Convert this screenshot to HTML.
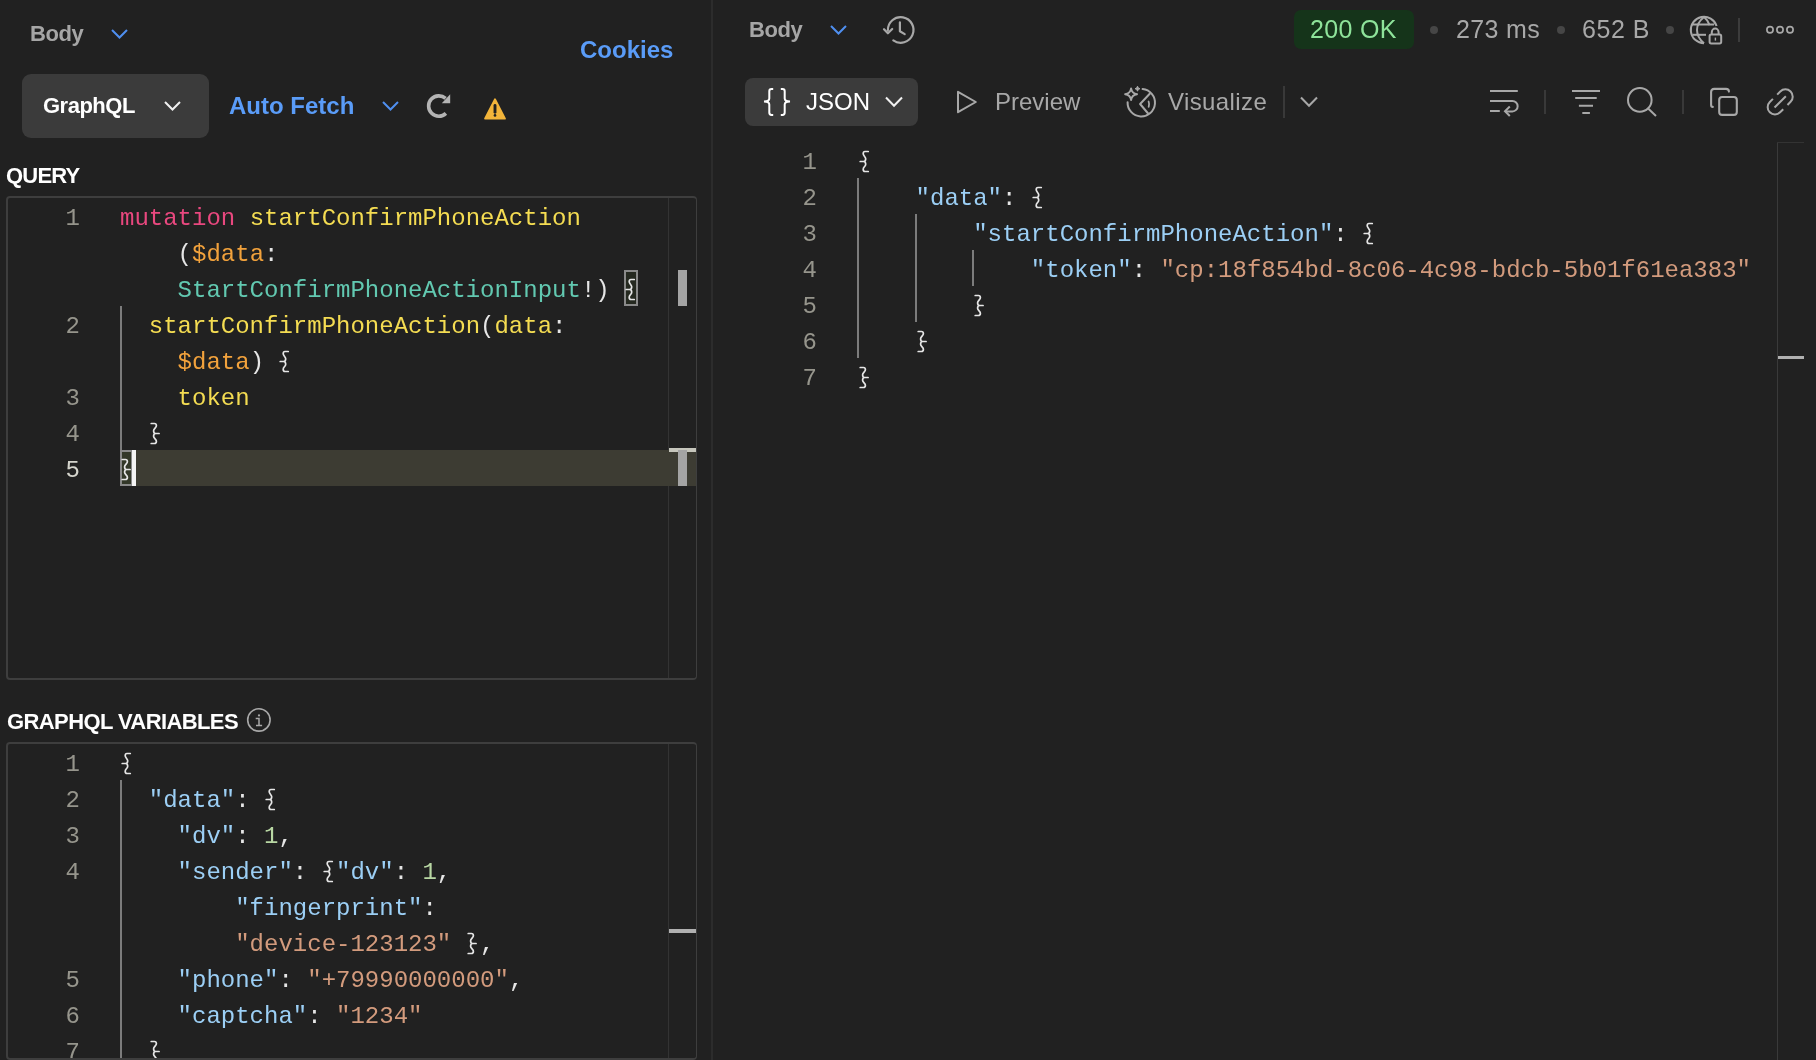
<!DOCTYPE html>
<html><head><meta charset="utf-8">
<style>
*{margin:0;padding:0;box-sizing:border-box}
html,body{width:1816px;height:1060px;overflow:hidden;background:#212121}
body{position:relative;font-family:"Liberation Sans",sans-serif}
.a{position:absolute;white-space:pre}
.ui,.code{will-change:transform}
.ui{font-family:"Liberation Sans",sans-serif;line-height:1}
.b{font-weight:bold}
.code{font-family:"Liberation Mono",monospace;font-size:24px;line-height:36px;white-space:pre;margin-top:3px;z-index:2}
.ln{color:#96958c;text-align:right;width:40px}
.kw{color:#e9487f}.fn{color:#f4dc52}.vr{color:#f2a23c}.ty{color:#62c9b1}.pu{color:#e6e6e6}
.k{color:#9ccff5}.s{color:#d39b7d}.n{color:#b8d7a3}
svg{position:absolute;overflow:visible}
.br{display:inline-block;position:relative;width:14.4px;height:36px;vertical-align:top}
.br svg{left:0;top:-3px;fill:none;stroke:#e6e6e6;stroke-width:1.7;stroke-linecap:round}
</style></head><body>

<!-- divider -->
<div class="a" style="left:711px;top:0;width:2px;height:1060px;background:#2c2c2c"></div>

<!-- LEFT HEADER -->
<div class="a ui b" style="left:30px;top:23px;font-size:22px;color:#a6a6a6;letter-spacing:-0.4px">Body</div>
<svg style="left:111px;top:29px" width="17" height="10" viewBox="0 0 17 10"><path d="M1 1 L8.5 8.5 L16 1" fill="none" stroke="#4f8ff0" stroke-width="2"/></svg>
<div class="a ui b" style="left:580px;top:38px;font-size:24px;color:#5a9cf8">Cookies</div>

<div class="a" style="left:22px;top:74px;width:187px;height:64px;background:#3b3b3b;border-radius:9px"></div>
<div class="a ui b" style="left:43px;top:95px;font-size:22px;color:#ffffff;letter-spacing:-0.5px">GraphQL</div>
<svg style="left:164px;top:101px" width="17" height="10" viewBox="0 0 17 10"><path d="M1 1 L8.5 8.5 L16 1" fill="none" stroke="#f0f0f0" stroke-width="2"/></svg>

<div class="a ui b" style="left:229px;top:94px;font-size:24px;color:#5a9cf8">Auto Fetch</div>
<svg style="left:382px;top:101px" width="17" height="10" viewBox="0 0 17 10"><path d="M1 1 L8.5 8.5 L16 1" fill="none" stroke="#4f8ff0" stroke-width="2"/></svg>
<svg style="left:420px;top:88px" width="40" height="40" viewBox="0 0 40 40"><path d="M25.9 25.4 A10.2 10.2 0 1 1 25.6 10.4" fill="none" stroke="#b4b4b4" stroke-width="3.6"/><path d="M21.8 15.2 L30.2 15.2 L30.2 6.2 Z" fill="#b4b4b4"/></svg>
<svg style="left:460px;top:88px" width="50" height="40" viewBox="0 0 50 40"><path d="M35 11.2 L45 30.6 L25 30.6 Z" fill="#f2b43a" stroke="#f2b43a" stroke-width="1.8" stroke-linejoin="round"/><path d="M35 17.5 L35 24.3" stroke="#212121" stroke-width="2.9" stroke-linecap="round"/><circle cx="35" cy="27.4" r="1.35" fill="#212121"/></svg>

<!-- QUERY -->
<div class="a ui b" style="left:6px;top:165px;font-size:22px;color:#ffffff;letter-spacing:-0.8px">QUERY</div>
<div class="a" style="left:6px;top:196px;width:691px;height:484px;border:2px solid #3e3e3e;border-right-width:1px;border-radius:4px"></div>
<div class="a" style="left:668px;top:198px;width:1px;height:480px;background:#333333"></div>

<!-- query lines -->
<div class="a" style="left:120px;top:450px;width:576px;height:36px;background:#3d3c33"></div>
<div class="a code ln" style="left:40px;top:198px">1</div>
<div class="a code ln" style="left:40px;top:306px">2</div>
<div class="a code ln" style="left:40px;top:378px">3</div>
<div class="a code ln" style="left:40px;top:414px">4</div>
<div class="a code ln" style="left:40px;top:450px;color:#d4d4cc">5</div>
<div class="a code" style="left:120px;top:198px"><span class="kw">mutation</span> <span class="fn">startConfirmPhoneAction</span></div>
<div class="a code" style="left:120px;top:234px"><span class="pu">    (</span><span class="vr">$data</span><span class="pu">:</span></div>
<div class="a code" style="left:120px;top:270px"><span class="ty">    StartConfirmPhoneActionInput</span><span class="pu">!) <span class="br"><svg viewBox="0 0 14.4 36" width="14.4" height="36"><path d="M10.3 9.5 L7 9.5 C5.6 9.5 5.2 10.4 5.2 11.8 C5.2 13.6 7.7 14.8 7.7 16.8 C7.7 18.6 6.8 19.5 5.6 19.5 L2.2 19.5 M5.6 19.5 C6.8 19.5 7.7 20.5 7.7 22.2 C7.7 24.2 5.2 25.4 5.2 27.2 C5.2 28.6 5.6 29.5 7 29.5 L10.3 29.5"/></svg></span></span></div>
<div class="a code" style="left:120px;top:306px"><span class="fn">  startConfirmPhoneAction</span><span class="pu">(</span><span class="fn">data</span><span class="pu">:</span></div>
<div class="a code" style="left:120px;top:342px"><span class="vr">    $data</span><span class="pu">) <span class="br"><svg viewBox="0 0 14.4 36" width="14.4" height="36"><path d="M10.3 9.5 L7 9.5 C5.6 9.5 5.2 10.4 5.2 11.8 C5.2 13.6 7.7 14.8 7.7 16.8 C7.7 18.6 6.8 19.5 5.6 19.5 L2.2 19.5 M5.6 19.5 C6.8 19.5 7.7 20.5 7.7 22.2 C7.7 24.2 5.2 25.4 5.2 27.2 C5.2 28.6 5.6 29.5 7 29.5 L10.3 29.5"/></svg></span></span></div>
<div class="a code" style="left:120px;top:378px"><span class="fn">    token</span></div>
<div class="a code" style="left:120px;top:414px"><span class="pu">  <span class="br"><svg viewBox="0 0 14.4 36" width="14.4" height="36"><path d="M2.2 9.5 L5.4 9.5 C6.8 9.5 7.4 10.4 7.4 11.8 C7.4 13.6 4.6 14.8 4.6 16.8 C4.6 18.6 5.4 19.5 6.6 19.5 L10.1 19.5 M6.6 19.5 C5.4 19.5 4.6 20.5 4.6 22.2 C4.6 24.2 7.4 25.4 7.4 27.2 C7.4 28.6 6.8 29.5 5.4 29.5 L2.2 29.5"/></svg></span></span></div>
<div class="a code" style="left:120px;top:450px"><span class="pu"><span class="br"><svg viewBox="0 0 14.4 36" width="14.4" height="36"><path d="M2.2 9.5 L5.4 9.5 C6.8 9.5 7.4 10.4 7.4 11.8 C7.4 13.6 4.6 14.8 4.6 16.8 C4.6 18.6 5.4 19.5 6.6 19.5 L10.1 19.5 M6.6 19.5 C5.4 19.5 4.6 20.5 4.6 22.2 C4.6 24.2 7.4 25.4 7.4 27.2 C7.4 28.6 6.8 29.5 5.4 29.5 L2.2 29.5"/></svg></span></span></div>

<!-- GRAPHQL VARIABLES -->
<div class="a ui b" style="left:7px;top:711px;font-size:22px;color:#ffffff;letter-spacing:-0.6px">GRAPHQL VARIABLES</div>
<div class="a" style="left:6px;top:742px;width:691px;height:318px;border:2px solid #3e3e3e;border-right-width:1px;border-radius:4px;z-index:5;box-shadow:0 2px 0 #212121"></div>
<div class="a" style="left:668px;top:744px;width:1px;height:314px;background:#333333"></div>

<div class="a code ln" style="left:40px;top:744px">1</div>
<div class="a code ln" style="left:40px;top:780px">2</div>
<div class="a code ln" style="left:40px;top:816px">3</div>
<div class="a code ln" style="left:40px;top:852px">4</div>
<div class="a code ln" style="left:40px;top:960px">5</div>
<div class="a code ln" style="left:40px;top:996px">6</div>
<div class="a code ln" style="left:40px;top:1032px">7</div>
<div class="a code" style="left:120px;top:744px"><span class="pu"><span class="br"><svg viewBox="0 0 14.4 36" width="14.4" height="36"><path d="M10.3 9.5 L7 9.5 C5.6 9.5 5.2 10.4 5.2 11.8 C5.2 13.6 7.7 14.8 7.7 16.8 C7.7 18.6 6.8 19.5 5.6 19.5 L2.2 19.5 M5.6 19.5 C6.8 19.5 7.7 20.5 7.7 22.2 C7.7 24.2 5.2 25.4 5.2 27.2 C5.2 28.6 5.6 29.5 7 29.5 L10.3 29.5"/></svg></span></span></div>
<div class="a code" style="left:120px;top:780px"><span class="k">  "data"</span><span class="pu">: <span class="br"><svg viewBox="0 0 14.4 36" width="14.4" height="36"><path d="M10.3 9.5 L7 9.5 C5.6 9.5 5.2 10.4 5.2 11.8 C5.2 13.6 7.7 14.8 7.7 16.8 C7.7 18.6 6.8 19.5 5.6 19.5 L2.2 19.5 M5.6 19.5 C6.8 19.5 7.7 20.5 7.7 22.2 C7.7 24.2 5.2 25.4 5.2 27.2 C5.2 28.6 5.6 29.5 7 29.5 L10.3 29.5"/></svg></span></span></div>
<div class="a code" style="left:120px;top:816px"><span class="k">    "dv"</span><span class="pu">: </span><span class="n">1</span><span class="pu">,</span></div>
<div class="a code" style="left:120px;top:852px"><span class="k">    "sender"</span><span class="pu">: <span class="br"><svg viewBox="0 0 14.4 36" width="14.4" height="36"><path d="M10.3 9.5 L7 9.5 C5.6 9.5 5.2 10.4 5.2 11.8 C5.2 13.6 7.7 14.8 7.7 16.8 C7.7 18.6 6.8 19.5 5.6 19.5 L2.2 19.5 M5.6 19.5 C6.8 19.5 7.7 20.5 7.7 22.2 C7.7 24.2 5.2 25.4 5.2 27.2 C5.2 28.6 5.6 29.5 7 29.5 L10.3 29.5"/></svg></span></span><span class="k">"dv"</span><span class="pu">: </span><span class="n">1</span><span class="pu">,</span></div>
<div class="a code" style="left:120px;top:888px"><span class="k">        "fingerprint"</span><span class="pu">:</span></div>
<div class="a code" style="left:120px;top:924px"><span class="s">        "device-123123"</span><span class="pu"> <span class="br"><svg viewBox="0 0 14.4 36" width="14.4" height="36"><path d="M2.2 9.5 L5.4 9.5 C6.8 9.5 7.4 10.4 7.4 11.8 C7.4 13.6 4.6 14.8 4.6 16.8 C4.6 18.6 5.4 19.5 6.6 19.5 L10.1 19.5 M6.6 19.5 C5.4 19.5 4.6 20.5 4.6 22.2 C4.6 24.2 7.4 25.4 7.4 27.2 C7.4 28.6 6.8 29.5 5.4 29.5 L2.2 29.5"/></svg></span>,</span></div>
<div class="a code" style="left:120px;top:960px"><span class="k">    "phone"</span><span class="pu">: </span><span class="s">"+79990000000"</span><span class="pu">,</span></div>
<div class="a code" style="left:120px;top:996px"><span class="k">    "captcha"</span><span class="pu">: </span><span class="s">"1234"</span></div>
<div class="a code" style="left:120px;top:1032px"><span class="pu">  <span class="br"><svg viewBox="0 0 14.4 36" width="14.4" height="36"><path d="M2.2 9.5 L5.4 9.5 C6.8 9.5 7.4 10.4 7.4 11.8 C7.4 13.6 4.6 14.8 4.6 16.8 C4.6 18.6 5.4 19.5 6.6 19.5 L10.1 19.5 M6.6 19.5 C5.4 19.5 4.6 20.5 4.6 22.2 C4.6 24.2 7.4 25.4 7.4 27.2 C7.4 28.6 6.8 29.5 5.4 29.5 L2.2 29.5"/></svg></span></span></div>

<!-- RIGHT HEADER -->
<div class="a ui b" style="left:749px;top:19px;font-size:22px;color:#a6a6a6;letter-spacing:-0.4px">Body</div>
<svg style="left:830px;top:25px" width="17" height="10" viewBox="0 0 17 10"><path d="M1 1 L8.5 8.5 L16 1" fill="none" stroke="#4f8ff0" stroke-width="2"/></svg>

<div class="a" style="left:1294px;top:10px;width:120px;height:39px;background:#15341a;border-radius:7px"></div>
<div class="a ui" style="left:1310px;top:17px;font-size:25px;color:#8ee39a;letter-spacing:0.35px">200 OK</div>
<div class="a ui" style="left:1456px;top:17px;font-size:25px;color:#a8a8a8;letter-spacing:0.35px">273 ms</div>
<div class="a ui" style="left:1582px;top:17px;font-size:25px;color:#a8a8a8;letter-spacing:0.55px">652 B</div>

<!-- JSON button row -->
<div class="a" style="left:745px;top:78px;width:173px;height:48px;background:#3b3b3b;border-radius:8px"></div>
<div class="a ui" style="left:806px;top:89.5px;font-size:24px;color:#ffffff">JSON</div>
<div class="a ui" style="left:995px;top:89.5px;font-size:24px;color:#a8a8a8">Preview</div>
<div class="a ui" style="left:1168px;top:89.5px;font-size:24px;letter-spacing:0.4px;color:#a8a8a8">Visualize</div>

<!-- response editor -->
<div class="a" style="left:1777px;top:142px;width:1px;height:918px;background:#3a3a3a"></div><div class="a" style="left:1777px;top:142px;width:27px;height:1px;background:#333333"></div>
<div class="a" style="left:1778px;top:356px;width:26px;height:3px;background:#b0b0b0"></div>
<div class="a code ln" style="left:777px;top:142px">1</div>
<div class="a code ln" style="left:777px;top:178px">2</div>
<div class="a code ln" style="left:777px;top:214px">3</div>
<div class="a code ln" style="left:777px;top:250px">4</div>
<div class="a code ln" style="left:777px;top:286px">5</div>
<div class="a code ln" style="left:777px;top:322px">6</div>
<div class="a code ln" style="left:777px;top:358px">7</div>
<div class="a code" style="left:858px;top:142px"><span class="pu"><span class="br"><svg viewBox="0 0 14.4 36" width="14.4" height="36"><path d="M10.3 9.5 L7 9.5 C5.6 9.5 5.2 10.4 5.2 11.8 C5.2 13.6 7.7 14.8 7.7 16.8 C7.7 18.6 6.8 19.5 5.6 19.5 L2.2 19.5 M5.6 19.5 C6.8 19.5 7.7 20.5 7.7 22.2 C7.7 24.2 5.2 25.4 5.2 27.2 C5.2 28.6 5.6 29.5 7 29.5 L10.3 29.5"/></svg></span></span></div>
<div class="a code" style="left:858px;top:178px"><span class="k">    "data"</span><span class="pu">: <span class="br"><svg viewBox="0 0 14.4 36" width="14.4" height="36"><path d="M10.3 9.5 L7 9.5 C5.6 9.5 5.2 10.4 5.2 11.8 C5.2 13.6 7.7 14.8 7.7 16.8 C7.7 18.6 6.8 19.5 5.6 19.5 L2.2 19.5 M5.6 19.5 C6.8 19.5 7.7 20.5 7.7 22.2 C7.7 24.2 5.2 25.4 5.2 27.2 C5.2 28.6 5.6 29.5 7 29.5 L10.3 29.5"/></svg></span></span></div>
<div class="a code" style="left:858px;top:214px"><span class="k">        "startConfirmPhoneAction"</span><span class="pu">: <span class="br"><svg viewBox="0 0 14.4 36" width="14.4" height="36"><path d="M10.3 9.5 L7 9.5 C5.6 9.5 5.2 10.4 5.2 11.8 C5.2 13.6 7.7 14.8 7.7 16.8 C7.7 18.6 6.8 19.5 5.6 19.5 L2.2 19.5 M5.6 19.5 C6.8 19.5 7.7 20.5 7.7 22.2 C7.7 24.2 5.2 25.4 5.2 27.2 C5.2 28.6 5.6 29.5 7 29.5 L10.3 29.5"/></svg></span></span></div>
<div class="a code" style="left:858px;top:250px"><span class="k">            "token"</span><span class="pu">: </span><span class="s">"cp:18f854bd-8c06-4c98-bdcb-5b01f61ea383"</span></div>
<div class="a code" style="left:858px;top:286px"><span class="pu">        <span class="br"><svg viewBox="0 0 14.4 36" width="14.4" height="36"><path d="M2.2 9.5 L5.4 9.5 C6.8 9.5 7.4 10.4 7.4 11.8 C7.4 13.6 4.6 14.8 4.6 16.8 C4.6 18.6 5.4 19.5 6.6 19.5 L10.1 19.5 M6.6 19.5 C5.4 19.5 4.6 20.5 4.6 22.2 C4.6 24.2 7.4 25.4 7.4 27.2 C7.4 28.6 6.8 29.5 5.4 29.5 L2.2 29.5"/></svg></span></span></div>
<div class="a code" style="left:858px;top:322px"><span class="pu">    <span class="br"><svg viewBox="0 0 14.4 36" width="14.4" height="36"><path d="M2.2 9.5 L5.4 9.5 C6.8 9.5 7.4 10.4 7.4 11.8 C7.4 13.6 4.6 14.8 4.6 16.8 C4.6 18.6 5.4 19.5 6.6 19.5 L10.1 19.5 M6.6 19.5 C5.4 19.5 4.6 20.5 4.6 22.2 C4.6 24.2 7.4 25.4 7.4 27.2 C7.4 28.6 6.8 29.5 5.4 29.5 L2.2 29.5"/></svg></span></span></div>
<div class="a code" style="left:858px;top:358px"><span class="pu"><span class="br"><svg viewBox="0 0 14.4 36" width="14.4" height="36"><path d="M2.2 9.5 L5.4 9.5 C6.8 9.5 7.4 10.4 7.4 11.8 C7.4 13.6 4.6 14.8 4.6 16.8 C4.6 18.6 5.4 19.5 6.6 19.5 L10.1 19.5 M6.6 19.5 C5.4 19.5 4.6 20.5 4.6 22.2 C4.6 24.2 7.4 25.4 7.4 27.2 C7.4 28.6 6.8 29.5 5.4 29.5 L2.2 29.5"/></svg></span></span></div>


<!-- ICONS right header -->
<svg style="left:875px;top:8px" width="50" height="44" viewBox="0 0 50 44"><path d="M18.3 32.4 A12.8 12.8 0 1 0 12.9 22.4" fill="none" stroke="#a8a8a8" stroke-width="2.2" stroke-linecap="round"/><path d="M9 21.2 L12.9 25.3 L17.2 21" fill="none" stroke="#a8a8a8" stroke-width="2.2" stroke-linecap="round" stroke-linejoin="round"/><path d="M24.9 14.3 V23.2 L29.7 26.1" fill="none" stroke="#a8a8a8" stroke-width="2.2" stroke-linecap="round" stroke-linejoin="round"/></svg>
<div class="a" style="left:1430px;top:26px;width:8px;height:8px;border-radius:50%;background:#464646"></div>
<div class="a" style="left:1557px;top:26px;width:8px;height:8px;border-radius:50%;background:#464646"></div>
<div class="a" style="left:1666px;top:26px;width:8px;height:8px;border-radius:50%;background:#464646"></div>
<svg style="left:1680px;top:8px" width="50" height="44" viewBox="0 0 50 44">
<path d="M24 35.2 A13.2 13.2 0 1 1 36.6 18" fill="none" stroke="#a8a8a8" stroke-width="2"/>
<path d="M24 9 C19 13 17 17.5 17 22 C17 27 19.5 31.5 24 35.2" fill="none" stroke="#a8a8a8" stroke-width="2"/>
<path d="M24 9 C26.5 11 28.5 14 29.6 17.2" fill="none" stroke="#a8a8a8" stroke-width="2"/>
<path d="M12.5 16.5 H34" fill="none" stroke="#a8a8a8" stroke-width="2"/>
<path d="M12.5 26.8 H26" fill="none" stroke="#a8a8a8" stroke-width="2"/>
<rect x="29.6" y="26.6" width="11.6" height="8.8" rx="1.6" fill="none" stroke="#a8a8a8" stroke-width="2"/>
<path d="M31.8 26.6 V24 A3.4 3.4 0 0 1 38.6 24 V26.6" fill="none" stroke="#a8a8a8" stroke-width="2"/>
<rect x="34.7" y="29.6" width="1.4" height="3" fill="#a8a8a8"/>
</svg>
<div class="a" style="left:1738px;top:18px;width:2px;height:24px;background:#3c3c3c"></div>
<svg style="left:1760px;top:20px" width="40" height="20" viewBox="0 0 40 20"><circle cx="10" cy="9.8" r="3.1" fill="none" stroke="#a8a8a8" stroke-width="1.7"/><circle cx="20" cy="9.8" r="3.1" fill="none" stroke="#a8a8a8" stroke-width="1.7"/><circle cx="30" cy="9.8" r="3.1" fill="none" stroke="#a8a8a8" stroke-width="1.7"/></svg>

<!-- JSON row icons -->
<svg style="left:750px;top:80px" width="50" height="45" viewBox="0 0 50 45">
<path d="M23.2 9.1 H21.5 Q19.3 9.1 19.3 11.3 V18.6 Q19.3 21.4 14 21.6 Q19.3 21.8 19.3 24.6 V32.5 Q19.3 34.9 21.5 34.9 H23.2" fill="none" stroke="#ffffff" stroke-width="2"/>
<path d="M30.8 9.1 H32.5 Q34.7 9.1 34.7 11.3 V18.6 Q34.7 21.4 40 21.6 Q34.7 21.8 34.7 24.6 V32.5 Q34.7 34.9 32.5 34.9 H30.8" fill="none" stroke="#ffffff" stroke-width="2"/>
</svg>
<svg style="left:885px;top:96px" width="18" height="12" viewBox="0 0 18 12"><path d="M1 1.5 L9 9.8 L17 1.5" fill="none" stroke="#f0f0f0" stroke-width="2"/></svg>
<svg style="left:950px;top:85px" width="35" height="35" viewBox="0 0 35 35"><path d="M8 6.8 L25.8 17 L8 27.2 Z" fill="none" stroke="#a8a8a8" stroke-width="2" stroke-linejoin="round"/></svg>
<svg style="left:1115px;top:80px" width="60" height="45" viewBox="0 0 60 45">
<path d="M27.6 9.1 A13.7 13.7 0 1 1 12.6 22.2" fill="none" stroke="#a8a8a8" stroke-width="2" stroke-linecap="round"/>
<path d="M35.2 13.2 L25.1 24 L33.1 33.5" fill="none" stroke="#a8a8a8" stroke-width="2" stroke-linejoin="round"/>
<path d="M33.6 21.5 Q34.6 24 33.7 26.8" fill="none" stroke="#a8a8a8" stroke-width="1.8" stroke-linecap="round"/>
<path d="M16.1 8.4 Q16.8 13.5 22.1 14.2 Q16.8 14.9 16.1 20 Q15.4 14.9 10.1 14.2 Q15.4 13.5 16.1 8.4 Z" fill="none" stroke="#a8a8a8" stroke-width="1.9" stroke-linejoin="round"/>
<path d="M22.5 6.2 Q22.8 8.4 25 8.7 Q22.8 9 22.5 11.2 Q22.2 9 20 8.7 Q22.2 8.4 22.5 6.2 Z" fill="#a8a8a8" stroke="#a8a8a8" stroke-width="1"/>
</svg>
<div class="a" style="left:1283px;top:86px;width:2px;height:32px;background:#393939"></div>
<svg style="left:1300px;top:96px" width="18" height="12" viewBox="0 0 18 12"><path d="M1 1.5 L9 9.8 L17 1.5" fill="none" stroke="#a8a8a8" stroke-width="2"/></svg>
<svg style="left:1480px;top:80px" width="200" height="45" viewBox="0 0 200 45">
<path d="M10 11 H37.8 M10 20.9 H32.4 A5.25 5.25 0 0 1 32.4 31.4 H25 M10 30.9 H19.8" fill="none" stroke="#a8a8a8" stroke-width="2"/>
<path d="M29.8 26.5 L25 31.2 L29.8 36" fill="none" stroke="#a8a8a8" stroke-width="2"/>
<path d="M92 11 H120 M95.2 18 H116.7 M98.9 25.8 H113 M102.3 33 H109.9" fill="none" stroke="#a8a8a8" stroke-width="2"/>
<circle cx="159.8" cy="19.9" r="11.8" fill="none" stroke="#a8a8a8" stroke-width="2"/>
<path d="M168.4 28.8 L176 36" fill="none" stroke="#a8a8a8" stroke-width="2"/>
</svg>
<div class="a" style="left:1544px;top:90px;width:2px;height:24px;background:#393939"></div>
<div class="a" style="left:1682px;top:90px;width:2px;height:24px;background:#393939"></div>
<svg style="left:1670px;top:80px" width="140" height="45" viewBox="0 0 140 45">
<rect x="49.2" y="17" width="17.6" height="17.9" rx="3" fill="none" stroke="#a8a8a8" stroke-width="2.1"/>
<path d="M42.8 26.9 Q41.1 26.9 41.1 25 V12 Q41.1 8.9 44.2 8.9 H56 Q58.9 8.9 58.9 11.6" fill="none" stroke="#a8a8a8" stroke-width="2.1" stroke-linecap="round"/>
<g transform="translate(110.2 21.9) rotate(-45)"><path d="M3 -7.3 H7.4 A7.3 7.3 0 0 1 7.4 7.3 H3 M-3 -7.3 H-7.4 A7.3 7.3 0 0 0 -7.4 7.3 H-3 M-8 0 H8" fill="none" stroke="#a8a8a8" stroke-width="2"/></g>
</svg>

<!-- info icon -->
<svg style="left:240px;top:700px" width="40" height="40" viewBox="0 0 40 40"><circle cx="18.9" cy="19.9" r="11.2" fill="none" stroke="#a8a8a8" stroke-width="1.6"/><circle cx="19" cy="15.4" r="1.1" fill="#a8a8a8"/><path d="M15.7 18.5 H19 V25.5 M16 25.5 H22.1" fill="none" stroke="#a8a8a8" stroke-width="1.5"/></svg>

<!-- query decorations -->
<div class="a" style="left:120px;top:306px;width:2px;height:144px;background:#7c7c7c"></div>
<div class="a" style="left:120px;top:450px;width:13px;height:36px;border:2px solid #8a8a8a;background:#333829"></div>
<div class="a" style="left:132px;top:450px;width:4px;height:36px;background:#f4f4f4;z-index:3"></div>
<div class="a" style="left:624px;top:270px;width:14px;height:36px;border:2px solid #8a8a8a;background:#252920"></div>
<div class="a" style="left:678px;top:270px;width:9px;height:36px;background:#a4a4a4"></div>
<div class="a" style="left:669px;top:448px;width:27px;height:4px;background:#c6c6bc"></div>
<div class="a" style="left:678px;top:450px;width:9px;height:36px;background:#a4a4a4"></div>

<!-- variables decorations -->
<div class="a" style="left:120px;top:780px;width:2px;height:278px;background:#7c7c7c"></div>
<div class="a" style="left:669px;top:929px;width:27px;height:4px;background:#b0b0b0"></div>

<!-- response guides -->
<div class="a" style="left:857px;top:178px;width:2px;height:180px;background:#7c7c7c"></div>
<div class="a" style="left:915px;top:214px;width:2px;height:108px;background:#7c7c7c"></div>
<div class="a" style="left:972px;top:250px;width:2px;height:36px;background:#7c7c7c"></div>

</body></html>
